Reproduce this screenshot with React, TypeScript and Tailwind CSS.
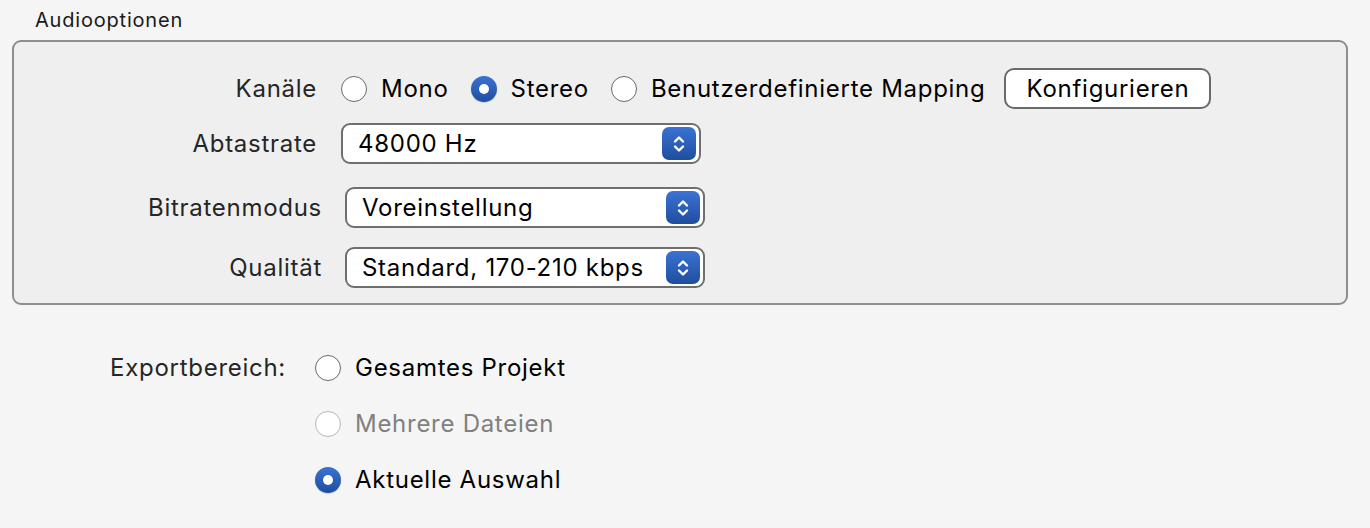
import React from 'react';

const font = { fontFamily: 'Inter, "Noto Sans", sans-serif' };

const Radio = ({ checked = false, disabled = false }: { checked?: boolean; disabled?: boolean }) => {
  if (checked) {
    return (
      <span className="flex h-[26px] w-[26px] shrink-0 items-center justify-center rounded-full bg-gradient-to-b from-[#3a73d4] to-[#1f4e9e] shadow-[0_0.5px_1px_rgba(0,0,0,0.3)]">
        <span className="h-[10px] w-[10px] rounded-full bg-white" />
      </span>
    );
  }
  return (
    <span
      className={
        'h-[26px] w-[26px] shrink-0 rounded-full border-[1.5px] bg-white ' +
        (disabled ? 'border-[#b4b4b4] bg-[#fafafa]' : 'border-[#6a6a6a]')
      }
    />
  );
};

const Option = ({ label, checked, disabled }: { label: string; checked?: boolean; disabled?: boolean }) => (
  <label className="flex items-center gap-[14px]">
    <Radio checked={checked} disabled={disabled} />
    <span className={disabled ? 'text-[#808080]' : 'text-black'}>{label}</span>
  </label>
);

const Stepper = () => (
  <span className="flex h-[33px] w-[34px] items-center justify-center rounded-[7px] bg-gradient-to-b from-[#3a73d4] to-[#1f4e9e]">
    <svg width="14" height="22" viewBox="0 0 14 22" fill="none" stroke="white" strokeWidth="2.4" strokeLinecap="round" strokeLinejoin="round">
      <path d="M3 8.5 L7 4.5 L11 8.5" />
      <path d="M3 13.5 L7 17.5 L11 13.5" />
    </svg>
  </span>
);

const Select = ({ value }: { value: string }) => (
  <div className="flex h-[41px] w-[360px] items-center justify-between rounded-[9px] border-2 border-[#6f6f6f] bg-white pl-[15px] pr-[3px]">
    <span className="text-black">{value}</span>
    <Stepper />
  </div>
);

export default function App() {
  return (
    <div style={font} className="h-[528px] w-[1370px] bg-[#f5f5f5] text-[24px] tracking-[0.03em] text-[#262626] antialiased">
      <div className="pl-[35px] pt-[8px] text-[20px] leading-[24px] tracking-[0.04em] text-[#1a1a1a]">Audiooptionen</div>

      <div className="ml-[12px] mr-[22px] mt-[8px] h-[265px] rounded-[9px] border-2 border-[#8e8e8e] bg-[#efefef] pt-[25px]">
        <div className="flex h-[41px] items-center pt-[2px]">
          <span className="w-[303px] text-right">Kanäle</span>
          <div className="ml-[24px] flex items-center gap-[22px]">
            <Option label="Mono" />
            <Option label="Stereo" checked />
            <Option label="Benutzerdefinierte Mapping" />
          </div>
          <button className="ml-[19px] h-[41px] w-[207px] rounded-[10px] border-2 border-[#6a6a6a] bg-white text-black">
            Konfigurieren
          </button>
        </div>

        <div className="mt-[15px] flex items-center">
          <span className="w-[303px] text-right">Abtastrate</span>
          <div className="ml-[24px]">
            <Select value="48000 Hz" />
          </div>
        </div>

        <div className="mt-[23px] flex items-center">
          <span className="w-[308px] text-right">Bitratenmodus</span>
          <div className="ml-[23px]">
            <Select value="Voreinstellung" />
          </div>
        </div>

        <div className="mt-[19px] flex items-center">
          <span className="w-[308px] text-right">Qualität</span>
          <div className="ml-[23px]">
            <Select value="Standard, 170-210 kbps" />
          </div>
        </div>
      </div>

      <div className="mt-[35px] grid grid-cols-[315px_1fr]">
        <span className="flex h-[56px] items-center justify-end pr-[29px]">Exportbereich:</span>
        <div className="flex flex-col">
          <div className="flex h-[56px] items-center">
            <Option label="Gesamtes Projekt" />
          </div>
          <div className="flex h-[56px] items-center">
            <Option label="Mehrere Dateien" disabled />
          </div>
          <div className="flex h-[56px] items-center">
            <Option label="Aktuelle Auswahl" checked />
          </div>
        </div>
      </div>
    </div>
  );
}
